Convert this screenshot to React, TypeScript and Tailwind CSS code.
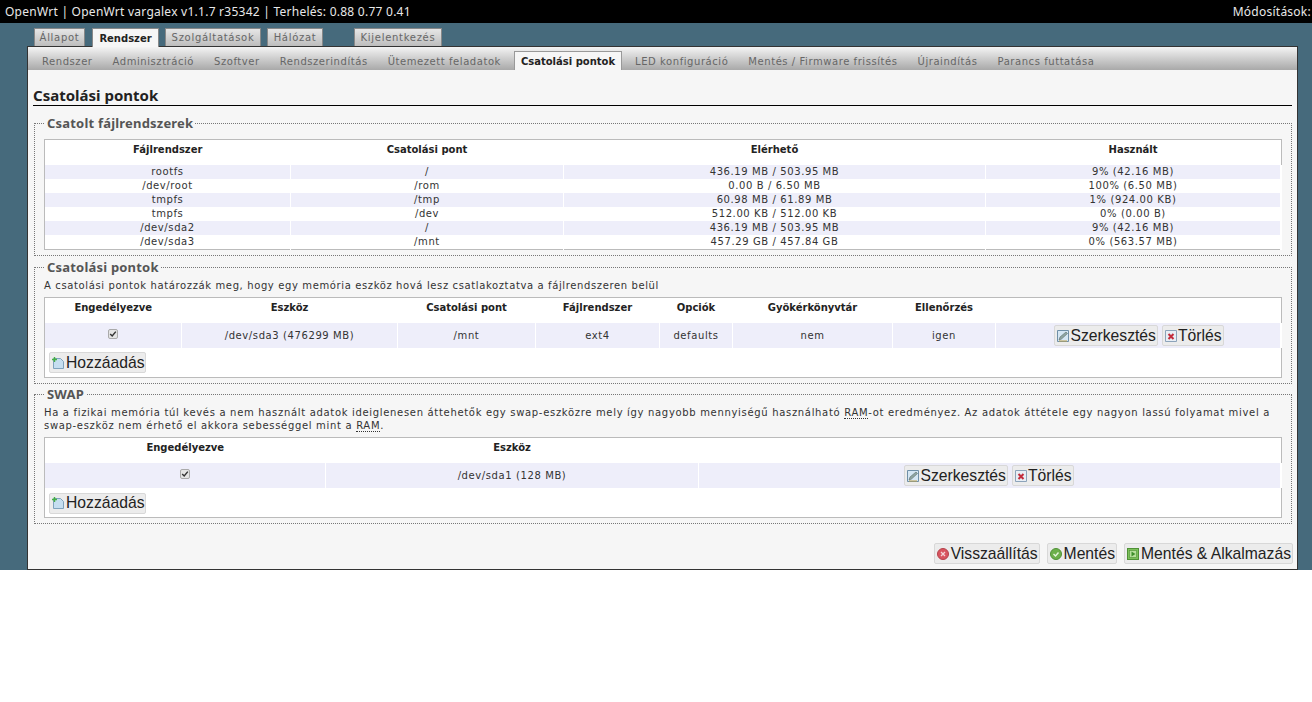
const dejavu = "font-['DejaVu_Sans',sans-serif]";
const noto = "font-['Noto_Sans',sans-serif]";

const topTabs = [
  { label: "Állapot", w: "w-[51px]" },
  { label: "Rendszer", w: "ml-px w-[67px]", active: true },
  { label: "Szolgáltatások", w: "w-[96px]" },
  { label: "Hálózat", w: "w-[56px]" },
];

const subTabs = [
  "Rendszer",
  "Adminisztráció",
  "Szoftver",
  "Rendszerindítás",
  "Ütemezett feladatok",
  "Csatolási pontok",
  "LED konfiguráció",
  "Mentés / Firmware frissítés",
  "Újraindítás",
  "Parancs futtatása",
];

const mounted = [
  ["rootfs", "/", "436.19 MB / 503.95 MB", "9% (42.16 MB)"],
  ["/dev/root", "/rom", "0.00 B / 6.50 MB", "100% (6.50 MB)"],
  ["tmpfs", "/tmp", "60.98 MB / 61.89 MB", "1% (924.00 KB)"],
  ["tmpfs", "/dev", "512.00 KB / 512.00 KB", "0% (0.00 B)"],
  ["/dev/sda2", "/", "436.19 MB / 503.95 MB", "9% (42.16 MB)"],
  ["/dev/sda3", "/mnt", "457.29 GB / 457.84 GB", "0% (563.57 MB)"],
];

function AddIcon() {
  return (
    <svg viewBox="0 0 14 14" className="mr-px h-[14px] w-[14px] shrink-0">
      <path d="M2.5 2.5h7l3 3v7h-10z" fill="#c5def0" stroke="#7fa3bd" />
      <path d="M3.5 1v5M1 3.5h5" stroke="#45b045" strokeWidth="1.4" />
    </svg>
  );
}

function EditIcon() {
  return (
    <svg viewBox="0 0 14 14" className="h-[14px] w-[14px] shrink-0">
      <path d="M1.5 1.5h11v11h-11z" fill="#d5e6f3" stroke="#6f8fa8" />
      <path d="M3 11l1-3 6-5 1.5 1.5-6 5.5z" fill="#8fa5a0" stroke="#5d6f70" strokeWidth="0.6" />
      <path d="M3 12h8" stroke="#c4a64f" />
    </svg>
  );
}

function DeleteIcon() {
  return (
    <svg viewBox="0 0 14 14" className="h-[14px] w-[14px] shrink-0">
      <path d="M1.5 1.5h11v11h-11z" fill="#e8eef5" stroke="#8ca3ba" />
      <path d="M4.5 5l5 5M9.5 5l-5 5" stroke="#c22c3c" strokeWidth="2" />
    </svg>
  );
}

function ResetIcon() {
  return (
    <svg viewBox="0 0 14 14" className="mr-px h-[14px] w-[14px] shrink-0">
      <circle cx="7" cy="7" r="5.5" fill="#d8555f" stroke="#b5424b" />
      <path d="M5 5l4 4M9 5l-4 4" stroke="#f3d6d8" strokeWidth="1.3" />
    </svg>
  );
}

function SaveIcon() {
  return (
    <svg viewBox="0 0 14 14" className="mr-px h-[14px] w-[14px] shrink-0">
      <circle cx="7" cy="7" r="5.5" fill="#6cb04a" stroke="#4f9136" />
      <path d="M4.5 7l2 2 3-3.5" fill="none" stroke="#e6f5dc" strokeWidth="1.4" />
    </svg>
  );
}

function ApplyIcon() {
  return (
    <svg viewBox="0 0 14 14" className="mr-px h-[14px] w-[14px] shrink-0">
      <rect x="1.5" y="1.5" width="11" height="11" fill="#7cc05a" stroke="#4f9136" />
      <rect x="3.5" y="3.5" width="7" height="7" fill="#b7e09d" stroke="#4f9136" strokeWidth="0.6" />
      <path d="M5.5 4.5l4 2.5-4 2.5z" fill="#3f8f2c" />
    </svg>
  );
}

function Btn({ icon, label }: { icon: React.ReactNode; label: string }) {
  return (
    <span className="inline-flex h-[21px] items-center rounded-[2px] border border-[#d8d8d8] bg-[#ececec] pl-px pr-px align-middle font-['Liberation_Sans',sans-serif] text-[15.7px] leading-none tracking-normal text-[#222]">
      {icon}
      {label}
    </span>
  );
}

function Check() {
  return (
    <span className="inline-flex h-[10px] w-[10px] items-center justify-center rounded-[2px] border border-[#aaa] bg-[#e4e4e4] align-middle">
      <svg viewBox="0 0 10 10" className="h-[8px] w-[8px]">
        <path d="M1.5 5l2.5 2.5 4.5-5.5" fill="none" stroke="#333" strokeWidth="1.8" />
      </svg>
    </span>
  );
}

function Section({ title, className, children }: { title: string; className: string; children: React.ReactNode }) {
  return (
    <fieldset className={`mx-[6px] border border-dotted border-[#777] px-[9px] ${className}`}>
      <legend className={`ml-px px-[2px] ${noto} text-[13px] font-bold leading-[15px] tracking-[0.2px] text-[#555]`}>
        {title}
      </legend>
      {children}
    </fieldset>
  );
}

function Th({ children, className = "" }: { children?: React.ReactNode; className?: string }) {
  return <th className={`pb-[6px] text-center font-bold tracking-normal text-[#222] ${className}`}>{children}</th>;
}

export default function App() {
  return (
    <div className={`h-[702px] w-[1312px] overflow-hidden bg-white ${dejavu} text-[10px] tracking-[0.6px] text-[#333]`}>
      <div className={`flex h-[23px] items-center justify-between bg-black pl-[5px] pr-[1px] ${noto} text-[12px] tracking-[0.25px] text-[#e8e8e8]`}>
        <span>OpenWrt | OpenWrt vargalex v1.1.7 r35342 | Terhelés: 0.88 0.77 0.41</span>
        <span>Módosítások:</span>
      </div>

      <div className="h-[547px] bg-[#466a7c] pl-[27px] pr-[14px]">
        <div className="relative z-10 flex h-[23px] items-end gap-[6px] pl-[7px]">
          {topTabs.map((t) => (
            <div
              key={t.label}
              className={`flex items-center justify-center border border-b-0 border-[#888] ${t.w} ${
                t.active
                  ? "-mb-px h-[19px] bg-[#f6f6f6] font-bold tracking-normal text-[#222]"
                  : "h-[18px] bg-gradient-to-b from-[#e6e6e6] to-[#bdbdbd] tracking-[0.7px] text-[#666]"
              }`}
            >
              {t.label}
            </div>
          ))}
          <div className="ml-[25px] flex h-[18px] w-[88px] items-center justify-center border border-b-0 border-[#888] bg-gradient-to-b from-[#e6e6e6] to-[#bdbdbd] tracking-[0.7px] text-[#666]">
            Kijelentkezés
          </div>
        </div>

        <div className="h-[524px] border border-[#333] bg-[#f6f6f6]">
          <div className="flex h-[23px] items-end bg-gradient-to-b from-[#f4f4f4] to-[#a9a9a9] pl-[4px] tracking-[0.56px]">
            {subTabs.map((t) =>
              t === "Csatolási pontok" ? (
                <div
                  key={t}
                  className="mx-[3px] flex h-[19px] items-center border border-b-0 border-[#999] bg-[#f6f6f6] px-[6px] pt-px font-bold tracking-normal text-[#222]"
                >
                  {t}
                </div>
              ) : (
                <div key={t} className="flex h-[20px] items-center px-[10px] pt-[2px] text-[#666]">
                  {t}
                </div>
              ),
            )}
          </div>

          <h2 className={`mx-[5px] mt-[15px] h-[21px] border-b border-black ${noto} text-[15px] font-bold leading-[20px] tracking-normal text-[#222]`}>
            Csatolási pontok
          </h2>

          <Section title="Csatolt fájlrendszerek" className="mt-[10px] h-[140px] pt-[8px]">
            <table className="w-[1238px] table-fixed border border-[#bbb] bg-white">
              <thead>
                <tr className="h-[25px]">
                  <Th className="w-[246px]">Fájlrendszer</Th>
                  <Th className="w-[273px]">Csatolási pont</Th>
                  <Th className="w-[422px]">Elérhető</Th>
                  <Th>Használt</Th>
                </tr>
              </thead>
              <tbody>
                {mounted.map((row, i) => (
                  <tr key={i} className={`h-[14px] ${i % 2 === 0 ? "bg-[#eeeefa]" : "bg-white"}`}>
                    {row.map((c, j) => (
                      <td key={j} className={`border-white p-0 text-center leading-[14px] ${j === 3 ? "border-r-2" : "border-r"}`}>
                        {c}
                      </td>
                    ))}
                  </tr>
                ))}
              </tbody>
            </table>
          </Section>

          <Section title="Csatolási pontok" className="mt-[4px] h-[124px] pt-[4px]">
            <p className="h-[18px] leading-[14px] tracking-[0.62px]">
              A csatolási pontok határozzák meg, hogy egy memória eszköz hová lesz csatlakoztatva a fájlrendszeren belül
            </p>
            <table className="w-[1238px] table-fixed border border-[#bbb] bg-white">
              <thead>
                <tr className="h-[25px]">
                  <Th className="w-[137px]">Engedélyezve</Th>
                  <Th className="w-[216px]">Eszköz</Th>
                  <Th className="w-[138px]">Csatolási pont</Th>
                  <Th className="w-[124px]">Fájlrendszer</Th>
                  <Th className="w-[73px]">Opciók</Th>
                  <Th className="w-[160px]">Gyökérkönyvtár</Th>
                  <Th className="w-[103px]">Ellenőrzés</Th>
                  <Th />
                </tr>
              </thead>
              <tbody>
                <tr className="h-[25px] bg-[#eeeefa]">
                  <td className="border-r border-white pb-[3px] text-center"><Check /></td>
                  {["/dev/sda3 (476299 MB)", "/mnt", "ext4", "defaults", "nem", "igen"].map((c) => (
                    <td key={c} className="border-r border-white text-center">{c}</td>
                  ))}
                  <td className="border-r-2 border-white pt-[2px] text-center">
                    <span className="inline-flex gap-[4px] pl-[2px]">
                      <Btn icon={<EditIcon />} label="Szerkesztés" />
                      <Btn icon={<DeleteIcon />} label="Törlés" />
                    </span>
                  </td>
                </tr>
                <tr className="h-[30px]">
                  <td colSpan={8} className="pl-[4px] pt-[1px]">
                    <Btn icon={<AddIcon />} label="Hozzáadás" />
                  </td>
                </tr>
              </tbody>
            </table>
          </Section>

          <Section title="SWAP" className="mt-[3px] h-[137px] pt-[4px]">
            <p className="h-[31px] leading-[13px] tracking-[0.68px]">
              Ha a fizikai memória túl kevés a nem használt adatok ideiglenesen áttehetők egy swap-eszközre mely így nagyobb mennyiségű használható{" "}
              <abbr className="border-b border-dotted border-[#333] no-underline">RAM</abbr>-ot eredményez. Az adatok áttétele egy nagyon lassú folyamat mivel a
              <br />
              swap-eszköz nem érhető el akkora sebességgel mint a{" "}
              <abbr className="border-b border-dotted border-[#333] no-underline">RAM</abbr>.
            </p>
            <table className="w-[1238px] table-fixed border border-[#bbb] bg-white">
              <thead>
                <tr className="h-[25px]">
                  <Th className="w-[281px]">Engedélyezve</Th>
                  <Th className="w-[373px]">Eszköz</Th>
                  <Th />
                </tr>
              </thead>
              <tbody>
                <tr className="h-[25px] bg-[#eeeefa]">
                  <td className="border-r border-white pb-[3px] text-center"><Check /></td>
                  <td className="border-r border-white text-center">/dev/sda1 (128 MB)</td>
                  <td className="border-r-2 border-white pt-[2px] text-center">
                    <span className="inline-flex gap-[4px] pr-px">
                      <Btn icon={<EditIcon />} label="Szerkesztés" />
                      <Btn icon={<DeleteIcon />} label="Törlés" />
                    </span>
                  </td>
                </tr>
                <tr className="h-[30px]">
                  <td colSpan={3} className="pl-[4px] pt-[2px]">
                    <Btn icon={<AddIcon />} label="Hozzáadás" />
                  </td>
                </tr>
              </tbody>
            </table>
          </Section>

          <div className="mt-[19px] flex justify-end gap-[7px] pr-[4px]">
            <Btn icon={<ResetIcon />} label="Visszaállítás" />
            <Btn icon={<SaveIcon />} label="Mentés" />
            <Btn icon={<ApplyIcon />} label="Mentés & Alkalmazás" />
          </div>
        </div>
      </div>
    </div>
  );
}
